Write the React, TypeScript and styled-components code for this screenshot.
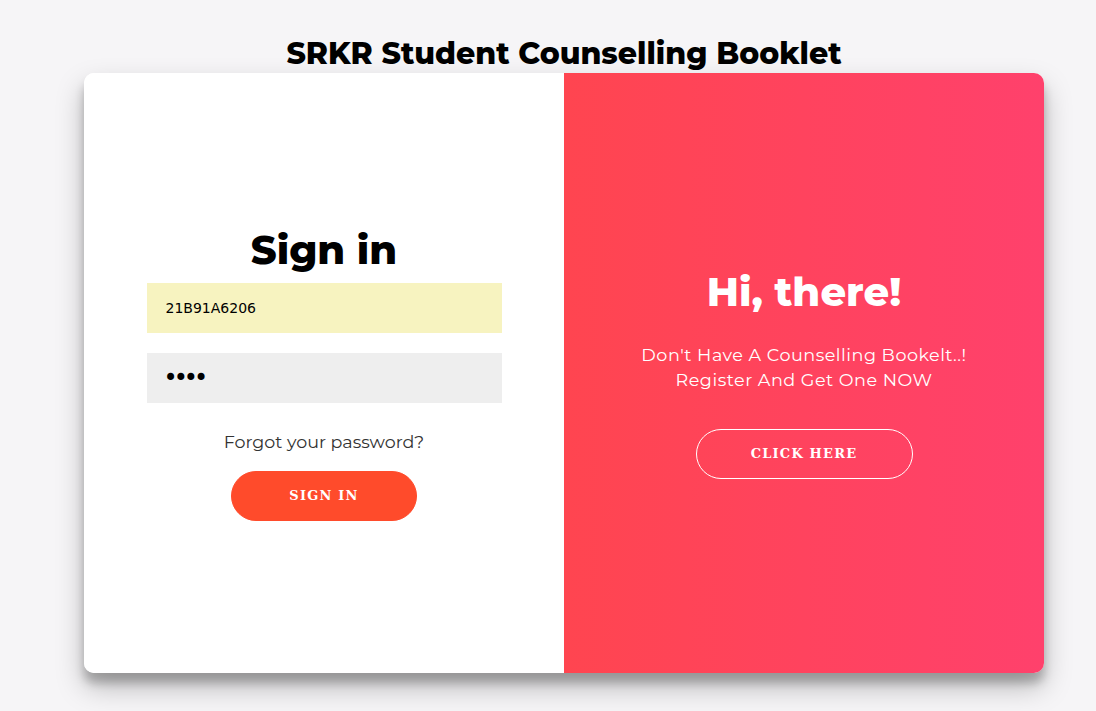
import React from "react";
import styled, { createGlobalStyle } from "styled-components";

const Global = createGlobalStyle`
  html, body { margin: 0; padding: 0; }
  body {
    background: #f6f5f7;
    font-family: "Montserrat", "Inter", "Open Sans", sans-serif;
  }
  * { box-sizing: border-box; }
`;

const Page = styled.div`
  display: flex;
  flex-direction: column;
  align-items: center;
  padding: 35px 0 0 32px;
  min-height: 711px;
`;

const Title = styled.h1`
  margin: 0;
  font-size: 30px;
  line-height: 38px;
  font-weight: 800;
  color: #000;
`;

const Card = styled.div`
  width: 960px;
  height: 600px;
  background: #fff;
  border-radius: 10px;
  box-shadow: 0 14px 28px rgba(0, 0, 0, 0.25), 0 10px 10px rgba(0, 0, 0, 0.22);
  display: grid;
  grid-template-columns: 480px 480px;
  overflow: hidden;
`;

const Panel = styled.div<{ $overlay?: boolean }>`
  display: flex;
  flex-direction: column;
  align-items: center;
  justify-content: center;
  text-align: center;
  background: ${(p) =>
    p.$overlay ? "linear-gradient(to right, #ff4550, #ff416c)" : "#fff"};
  color: ${(p) => (p.$overlay ? "#fff" : "#000")};
`;

const Heading = styled.h2`
  margin: 0;
  font-size: 40px;
  line-height: 48px;
  font-weight: 800;
`;

const Input = styled.input<{ $autofill?: boolean }>`
  width: 355px;
  height: 50px;
  border: none;
  outline: none;
  padding: 12px 19px;
  background: ${(p) => (p.$autofill ? "#f7f3c0" : "#eeeeee")};
  font-family: "DejaVu Sans", Verdana, sans-serif;
  font-size: 14px;
  color: #000;
  margin-top: ${(p) => (p.$autofill ? "9px" : "20px")};
`;

const PasswordInput = styled(Input)`
  font-size: 24px;
  letter-spacing: -4px;
  padding-left: 17px;
`;

const Forgot = styled.a`
  margin-top: 29px;
  font-size: 17.5px;
  line-height: 20px;
  color: #333;
  text-decoration: none;
`;

const Button = styled.button<{ $ghost?: boolean }>`
  height: 50px;
  width: ${(p) => (p.$ghost ? "217px" : "186px")};
  border-radius: 25px;
  border: 1px solid ${(p) => (p.$ghost ? "#fff" : "#ff4b2b")};
  background: ${(p) => (p.$ghost ? "transparent" : "#ff4b2b")};
  color: #fff;
  font-family: "DejaVu Serif", "Liberation Serif", serif;
  font-weight: bold;
  font-size: 13px;
  letter-spacing: 1.2px;
  text-transform: uppercase;
  margin-top: ${(p) => (p.$ghost ? "37px" : "19px")};
`;

const Text = styled.p`
  margin: 26px 0 0;
  font-size: 17.6px;
  line-height: 25px;
  letter-spacing: 0.5px;
  font-weight: 400;
`;

export default function App() {
  return (
    <>
      <Global />
      <Page>
        <Title>SRKR Student Counselling Booklet</Title>
        <Card>
          <Panel>
            <Heading>Sign in</Heading>
            <Input $autofill type="text" defaultValue="21B91A6206" />
            <PasswordInput type="password" defaultValue="1234" />
            <Forgot href="#">Forgot your password?</Forgot>
            <Button>Sign In</Button>
          </Panel>
          <Panel $overlay>
            <Heading>Hi, there!</Heading>
            <Text>
              Don't Have A Counselling Bookelt..!
              <br />
              Register And Get One NOW
            </Text>
            <Button $ghost>Click Here</Button>
          </Panel>
        </Card>
      </Page>
    </>
  );
}
